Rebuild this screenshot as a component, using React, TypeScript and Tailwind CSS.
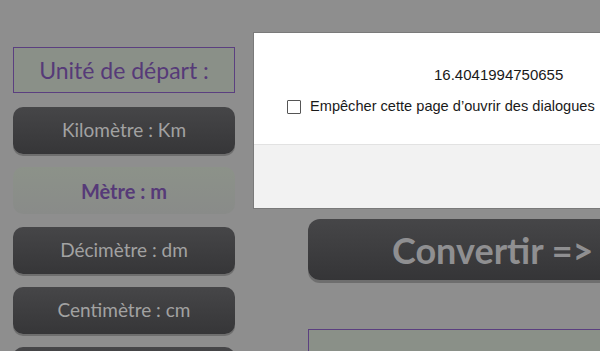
import React from 'react';

const units = [
  { label: 'Kilomètre : Km', active: false },
  { label: 'Mètre : m', active: true },
  { label: 'Décimètre : dm', active: false },
  { label: 'Centimètre : cm', active: false },
  { label: 'Millimètre : mm', active: false },
];

function UnitButton({ label, active }: { label: string; active: boolean }) {
  if (active) {
    return (
      <div className="h-[47px] rounded-[10px] flex items-center justify-center bg-gradient-to-b from-[#8c9289] to-[#898b89] text-[20px] font-bold text-[#563a78]">
        {label}
      </div>
    );
  }
  return (
    <div className="h-[47px] rounded-[10px] flex items-center justify-center bg-gradient-to-b from-[#464648] to-[#363638] shadow-[0_2px_0_#6e6e6e] text-[19px] text-[#a2a2a2]">
      {label}
    </div>
  );
}

export default function App() {
  return (
    <div className="relative w-[600px] h-[351px] overflow-hidden bg-[#8e8e8e]" style={{ fontFamily: 'Lato, "Open Sans", sans-serif' }}>
      <div className="flex">
        {/* Left column */}
        <div className="w-[222px] ml-[13px] pt-[47px] flex flex-col gap-[13px] shrink-0">
          <div className="h-[46px] border border-[#5b3f80] bg-[#8a9088] flex items-center justify-center text-[23px] text-[#563a78] mb-px">
            Unité de départ :
          </div>
          {units.map((u) => (
            <UnitButton key={u.label} label={u.label} active={u.active} />
          ))}
        </div>

        {/* Right column */}
        <div className="ml-[73px] pt-[219px] w-[320px] shrink-0 flex flex-col">
          <div className="h-[61px] rounded-[12px] bg-gradient-to-b from-[#464648] to-[#353537] shadow-[0_3px_0_#6e6e6e] flex items-center pl-[84px]">
            <span className="text-[36px] font-bold text-[#8f8f91]">Convertir =&gt;</span>
          </div>
          <div className="mt-[49px] h-[40px] border border-[#5b3f80] bg-[#8a9088]" />
        </div>
      </div>

      {/* Alert dialog */}
      <div className="absolute left-[253px] top-[32px] w-[380px] h-[177px] bg-white border border-[#7a7a7a] flex flex-col" style={{ fontFamily: '"Liberation Sans", Arial, sans-serif' }}>
        <div className="h-[111px] flex flex-col">
          <div className="pt-[33px] pl-[180px] text-[15px] text-[#1a1a1a] leading-[18px]">16.4041994750655</div>
          <div className="mt-[12px] pl-[33px] flex items-center gap-[9px] text-[14.6px] text-[#1a1a1a] whitespace-nowrap">
            <span className="w-[14px] h-[14px] shrink-0 border border-[#555] bg-white rounded-[1px]" />
            <span>Empêcher cette page d’ouvrir des dialogues</span>
          </div>
        </div>
        <div className="flex-1 bg-[#f2f2f2] border-t border-[#e2e2e2]" />
      </div>
    </div>
  );
}
